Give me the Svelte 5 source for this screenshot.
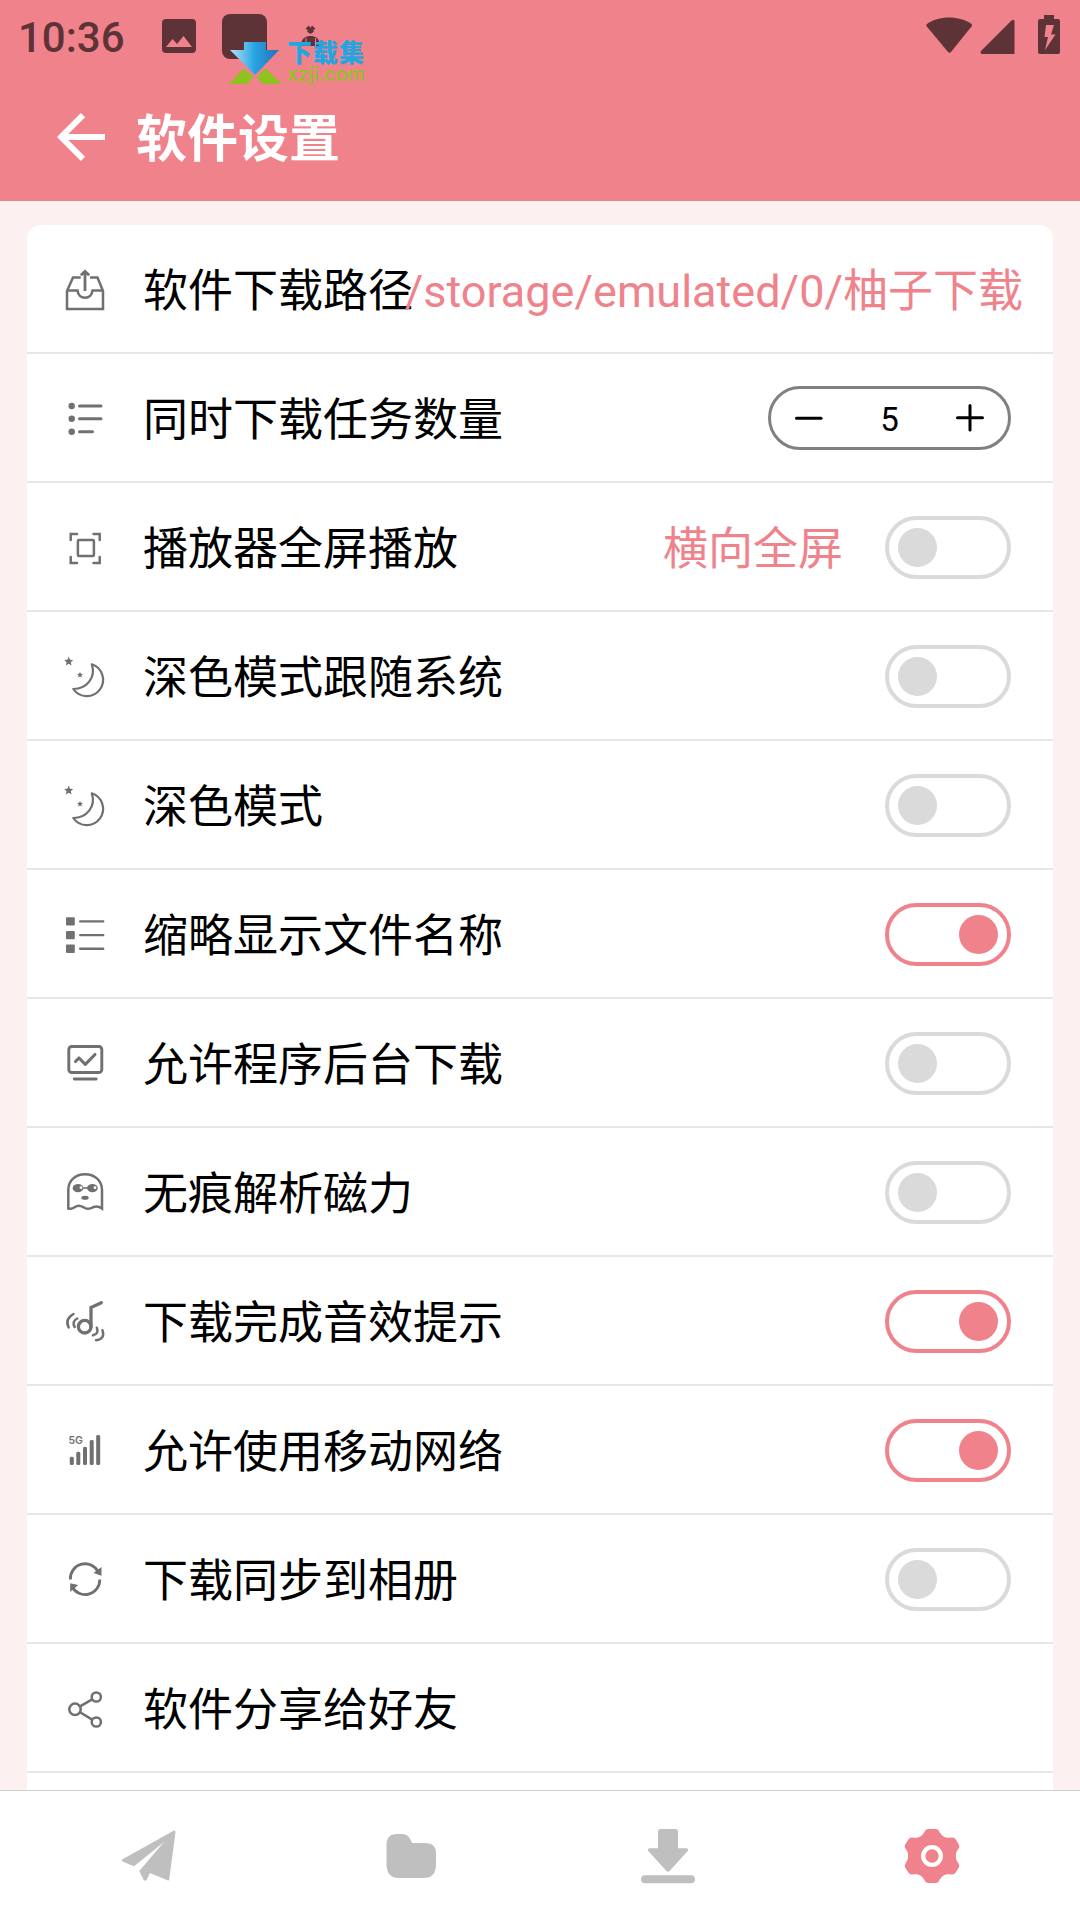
<script lang="ts">
	type Row = {
		icon: string;
		label: string;
		value?: string;
		on?: boolean;
		stepper?: boolean;
	};

	let rows: Row[] = $state([
		{ icon: 'tray', label: '软件下载路径', value: '/storage/emulated/0/柚子下载' },
		{ icon: 'tasks', label: '同时下载任务数量', stepper: true },
		{ icon: 'fullscreen', label: '播放器全屏播放', value: '横向全屏', on: false },
		{ icon: 'moon', label: '深色模式跟随系统', on: false },
		{ icon: 'moon', label: '深色模式', on: false },
		{ icon: 'list', label: '缩略显示文件名称', on: true },
		{ icon: 'monitor', label: '允许程序后台下载', on: false },
		{ icon: 'ghost', label: '无痕解析磁力', on: false },
		{ icon: 'sound', label: '下载完成音效提示', on: true },
		{ icon: 'signal', label: '允许使用移动网络', on: true },
		{ icon: 'sync', label: '下载同步到相册', on: false },
		{ icon: 'share', label: '软件分享给好友' }
	]);

	let count = $state(5);

	// x, top of each bar in the 5G icon
	const bars = [
		[8.8, 30.7],
		[15.3, 25.7],
		[22, 20.7],
		[28.7, 14],
		[35.2, 9]
	];
</script>

{#snippet rowIcon(name: string)}
	<svg class="icon" viewBox="0 0 48 48">
		{#if name === 'tray'}
			<path d="M19.7 12.5H12L6 26V44H42V26L36.5 12.5H29" />
			<path d="M6 25.5H16.5C17 30 20 32.8 24 32.8S31 30 31.5 25.5H42" />
			<path d="M24 26V7.5M19.8 10.3L24 6.5L28.2 10.3" stroke-width="2.8" />
		{:else if name === 'tasks'}
			<g class="fill">
				<circle cx="10.7" cy="12" r="3.2" />
				<circle cx="10.7" cy="24.7" r="3.2" />
				<circle cx="10.7" cy="37.7" r="3.2" />
			</g>
			<path class="round" d="M18.5 12H40M18.5 24.7H40M18.5 37.7H31.5" stroke-width="3" />
		{:else if name === 'fullscreen'}
			<rect x="16.9" y="17" width="16" height="16" rx="1" />
			<path class="round" d="M9.7 17V11H16M32.5 11H38.7V17M38.7 34V40H32.5M16 40H9.7V34" />
		{:else if name === 'moon'}
			<path class="moon" d="M30.8 12.3A16.3 16.3 0 1 1 12.3 37C25.5 37 35.3 25.5 30.8 12.3Z" />
			<path class="fill" d="M7.7 4.6L9 7.7L12.2 8L9.8 10.2L10.6 13.4L7.7 11.7L4.8 13.4L5.6 10.2L3.2 8L6.4 7.7Z" />
			<path class="fill" d="M19 19.9L19.9 21.8L21.9 22.1L20.4 23.5L20.8 25.5L19 24.5L17.2 25.5L17.6 23.5L16.1 22.1L18.1 21.8Z" />
		{:else if name === 'list'}
			<g class="fill">
				<rect x="5" y="7.2" width="8.8" height="8.4" rx="1" />
				<rect x="5" y="20.9" width="8.8" height="8.4" rx="1" />
				<rect x="5" y="34.5" width="8.8" height="8.4" rx="1" />
			</g>
			<path class="round" d="M19.2 11.4H42.2M19.2 25.1H42.2M19.2 38.8H42.2" stroke-width="2.4" />
		{:else if name === 'monitor'}
			<rect x="7.8" y="7.5" width="33" height="26" rx="3" stroke-width="2.9" />
			<path class="round" d="M13.3 40H35.2" stroke-width="2.9" />
			<path class="round" d="M14.5 22.5L18 19L24.3 25.3L34 15.5" stroke-width="3.1" stroke-linejoin="round" />
		{:else if name === 'ghost'}
			<path d="M7.3 40.5V22C7.3 12 15 6.3 24 6.3S41 12 41 22V40.5Q35.5 36.5 30 40.2Q26.5 41.5 24 40Q18 36 14 39Q10.5 41.5 7.3 40.5Z" />
			<path d="M17 20H31" stroke-width="1.6" />
			<g class="fill">
				<ellipse cx="17" cy="20.2" rx="5.3" ry="4.1" />
				<ellipse cx="31.4" cy="20.2" rx="5.3" ry="4.1" />
				<ellipse cx="24" cy="29.7" rx="3.7" ry="2" />
			</g>
			<circle class="hole" cx="20" cy="19.7" r="1.4" />
			<circle class="hole" cx="34" cy="19.7" r="1.4" />
		{:else if name === 'sound'}
			<circle cx="23.7" cy="29.7" r="6.3" stroke-width="3.3" />
			<path class="round" d="M30 30V10.5L40.3 5.8" stroke-width="3.3" />
			<path class="round" d="M12.5 17Q3.5 22 7.7 30.5M16.3 21.5Q10.5 24.5 13.7 30M35.8 30.7Q38.5 36.5 32 38.3M41.5 33.3Q44.5 42 35 43.2" />
		{:else if name === 'signal'}
			<text x="7.5" y="17.7">5G</text>
			{#each bars as [x, y]}
				<rect class="fill" {x} {y} width="4" height={39 - y} rx="1.5" />
			{/each}
		{:else if name === 'sync'}
			<path d="M9.4 24.5A14.7 14.7 0 0 1 37.5 17.5M38.8 24.5A14.7 14.7 0 0 1 11 31.5" stroke-width="2.8" />
			<path class="fill" d="M40.5 12V20.8L32.5 18Z" />
			<path class="fill" d="M9.2 28.2L17.2 30L9.2 37Z" />
		{:else if name === 'share'}
			<circle cx="14" cy="25.3" r="5.7" />
			<circle cx="35.3" cy="13" r="4.6" />
			<circle cx="35.3" cy="38" r="4.6" />
			<path d="M19 22.3L31.2 15.3M19 28.3L31.2 35.6" />
		{/if}
	</svg>
{/snippet}

<div class="screen">
	<header>
		<div class="status">
			<span class="time">10:36</span>
			<svg class="notices" viewBox="0 0 180 60">
				<path fill-rule="evenodd" d="M4 19H30Q34 19 34 23V49Q34 53 30 53H4Q0 53 0 49V23Q0 19 4 19ZM4 47H30L21.5 36L15 44L10.5 39Z" />
				<rect x="60" y="14" width="45" height="45" rx="8" />
				<path d="M139 44C140 38 144 36 148.5 36S157 38 158 44V46H139Z" />
				<path d="M148.500 34L144.800 31.500L146 30.500L143.500 28.500L147 25.500L148.500 28L150 25.500L153.500 28.500L151 30.500L152.200 31.500Z" />
				<path class="seam" d="M144 38V46M153.5 38V46" />
			</svg>
			<svg class="system" viewBox="0 0 136 60">
				<path d="M1 24C12 15.2 34 15.2 45.5 24Q46.5 25 45.5 26.5L25 52Q23.5 53.5 22 52L.8 26.5Q-.2 25 1 24Z" />
				<path d="M56.5 54Q53.5 53.5 55 51L85 21Q88 18.5 88.5 21.5V54Z" />
				<path fill-rule="evenodd" d="M118 15H128V19H132Q134 19 134 21V52Q134 54 132 54H114Q112 54 112 52V21Q112 19 114 19H118ZM120 25L118.5 37H122L119 50L129.5 34.5H125L128 25Z" />
			</svg>
		</div>
		<div class="title">
			<svg class="back" viewBox="0 0 50 52"><path d="M49 26H5M27 4.2L5.2 26L27 47.8" /></svg>
			<h1>软件设置</h1>
		</div>
		<div class="mark">
			<svg viewBox="0 0 54 44">
				<defs>
					<linearGradient id="arrow">
						<stop offset="0" stop-color="#b5e3f8" />
						<stop offset="0.5" stop-color="#25a5e2" />
						<stop offset="1" stop-color="#2a6cb8" />
					</linearGradient>
				</defs>
				<path fill="url(#arrow)" d="M16 0H38V8H51L27 33L2 8H16Z" />
				<path fill="#8dc21f" d="M1 42L16 26.5L25.5 35L19 42ZM28.5 35L38 26.5L53.5 42H35Z" />
			</svg>
			<div class="mark-text">
				<b>下载集</b>
				<span>xzji.com</span>
			</div>
		</div>
	</header>

	<main>
		<div class="card">
			{#each rows as row}
				<div class="row">
					{@render rowIcon(row.icon)}
					<span class="label">{row.label}</span>
					{#if row.value}
						<span class="value" class:beside={row.on !== undefined}>{row.value}</span>
					{/if}
					{#if row.stepper}
						<div class="stepper">
							<button aria-label="minus" onclick={() => count--}>
								<svg viewBox="0 0 28 28"><path d="M1.5 14.2H26" /></svg>
							</button>
							<span>{count}</span>
							<button aria-label="plus" onclick={() => count++}>
								<svg viewBox="0 0 28 28"><path d="M1.5 13.7H26.5M14 1.5V26" /></svg>
							</button>
						</div>
					{/if}
					{#if row.on !== undefined}
						<button class="toggle" class:on={row.on} aria-label={row.label} onclick={() => (row.on = !row.on)}>
							<span class="knob"></span>
						</button>
					{/if}
				</div>
			{/each}
			<div class="row"></div>
		</div>
	</main>

	<nav>
		<svg viewBox="0 0 60 60">
			<path d="M56 4.5Q57.5 4 57.5 6L51.2 53.5Q51 55 49.5 54.2L32 47L28.5 54Q27 55.5 25.7 54L21.3 45L46 16L17 39.5Q15.5 40.5 14 39.6L4.5 35.5Q3 34.5 4.5 33.3Z" />
		</svg>
		<svg viewBox="0 0 60 60">
			<path d="M18 8H23.5Q30 8 33 17H46Q57 17 57 27V38Q57 52 45 52H20Q7.5 52 7.5 38V19Q7.5 8 18 8Z" />
		</svg>
		<svg viewBox="0 0 60 60">
			<path d="M18 6Q18 3 21 3H35Q38 3 38 6V22.2H46Q49.5 22.5 47.5 25.2L29.5 45Q28 46.5 26.5 45L8.5 25.2Q6.5 22.5 10 22.2H18Z" />
			<rect x="1" y="49.3" width="54" height="7.9" rx="3.9" />
		</svg>
		<svg class="active" viewBox="0 0 60 60">
			<path d="M27 3H35Q37 3 38 5C41 11 45 12.5 51 11.5Q53.5 11.3 54.5 13L57.5 18Q59 21 57.5 22.5C54 27 54 33 57.5 37.5Q59 39.5 57.5 42L54.5 46.8Q53 48.8 51 48.5C45 47.5 41 49 38 55Q37 57 35 57H27Q25 57 24 55C21 49 17 47.5 11 48.5Q9 48.8 7.5 46.8L4.5 42Q3 39.5 4.5 37.5C8 33 8 27 4.5 22.5Q3 21 4.5 18L7.5 13.2Q9 11.3 11 11.5C17 12.5 21 11 24 5Q25 3 27 3Z" />
			<circle cx="31" cy="30" r="8.8" />
		</svg>
	</nav>
</div>

<style>
	:global(body) {
		margin: 0;
	}

	.screen {
		width: 1080px;
		height: 1920px;
		display: flex;
		flex-direction: column;
		overflow: hidden;
		background: #fdf0f0;
		font-family: Roboto, 'Noto Sans CJK SC', sans-serif;
		color: #000;
	}

	header {
		position: relative;
		flex: none;
		height: 201px;
		background: #f0828b;
	}

	.status {
		display: flex;
		height: 72px;
		padding: 0 18px;
		color: #5e3338;
		fill: #5e3338;
	}

	.time {
		width: 144px;
		font-size: 42px;
		font-weight: 500;
		line-height: 75px;
	}

	.notices {
		width: 180px;
		height: 60px;
	}

	.seam {
		stroke: #f0828b;
		stroke-width: 1;
	}

	.system {
		width: 136px;
		height: 60px;
		margin-left: auto;
	}

	.title {
		display: flex;
		align-items: center;
		height: 129px;
		padding-left: 56px;
	}

	.back {
		width: 50px;
		height: 52px;
		fill: none;
		stroke: #fff;
		stroke-width: 6;
	}

	h1 {
		margin: 6px 0 0 30px;
		color: #fff;
		font-size: 51px;
		font-weight: 700;
		line-height: 60px;
	}

	/* site mark floating over the status bar */
	.mark {
		position: absolute;
		left: 228px;
		top: 42px;
		display: flex;
		gap: 5px;
	}

	.mark svg {
		width: 54px;
		height: 44px;
	}

	.mark-text {
		display: flex;
		flex-direction: column;
	}

	.mark b {
		color: #25a5e0;
		font-size: 25px;
		font-weight: 900;
		letter-spacing: 1px;
		line-height: 23px;
	}

	.mark span {
		color: #8fc31f;
		font-family: Inter, sans-serif;
		font-size: 19.5px;
		font-weight: 500;
		line-height: 19px;
	}

	main {
		flex: 1;
		min-height: 0;
		padding: 24px 27px 0;
		overflow: hidden;
	}

	.card {
		background: #fff;
		border-radius: 14px;
	}

	.row {
		display: flex;
		align-items: center;
		box-sizing: border-box;
		height: 129px;
		padding: 0 42px 0 34px;
		border-bottom: 2px solid #e7e7e7;
	}

	.icon {
		flex: none;
		width: 48px;
		height: 48px;
		margin-right: 34px;
		fill: none;
		stroke: #707070;
		stroke-width: 2.5;
	}

	.icon .fill,
	.icon text {
		fill: #707070;
		stroke: none;
	}

	.icon .hole {
		fill: #fff;
		stroke: none;
	}

	.icon .round {
		stroke-linecap: round;
	}

	.icon .moon {
		stroke-width: 2.2;
		stroke-linejoin: round;
	}

	.icon text {
		font: 600 10.5px Inter, sans-serif;
	}

	.label,
	.value {
		padding-top: 7px;
		font-size: 45px;
		line-height: 60px;
		white-space: nowrap;
	}

	.value {
		margin: 0 -12px 0 auto;
		color: #f0828b;
	}

	/* a long path runs back over its label */
	.label {
		flex: 0 0 auto;
	}

	.label + .value:not(.beside) {
		flex: 1 1 0;
		min-width: 0;
		display: flex;
		justify-content: flex-end;
	}

	.value.beside {
		margin-right: 42px;
	}

	.stepper {
		display: flex;
		align-items: center;
		justify-content: space-between;
		box-sizing: border-box;
		width: 243px;
		height: 64px;
		margin-left: auto;
		padding: 0 24px;
		border: 3px solid #808080;
		border-radius: 32px;
		font-size: 33px;
	}

	.stepper span {
		padding-top: 3px;
	}

	button {
		display: block;
		padding: 0;
		border: 0;
		background: none;
	}

	.stepper svg {
		display: block;
		width: 28px;
		height: 28px;
		stroke: #000;
		stroke-width: 3;
		stroke-linecap: round;
	}

	.toggle {
		display: flex;
		align-items: center;
		box-sizing: border-box;
		flex: none;
		width: 126px;
		height: 63px;
		margin: 2px 0 0 auto;
		padding: 0 9px;
		border: 4px solid #dadada;
		border-radius: 32px;
	}

	.beside + .toggle {
		margin-left: 0;
	}

	.knob {
		width: 39px;
		height: 39px;
		border-radius: 50%;
		background: #dadada;
	}

	.toggle.on {
		justify-content: flex-end;
		border-color: #f0828b;
	}

	.on .knob {
		background: #f0828b;
	}

	nav {
		display: flex;
		flex: none;
		gap: 201px;
		box-sizing: border-box;
		height: 130px;
		padding: 35px 0 0 118px;
		border-top: 1px solid #d0d0d0;
		background: #fff;
	}

	nav svg {
		width: 60px;
		height: 60px;
		fill: #bfbfbf;
	}

	nav .active {
		fill: #f0828b;
	}

	nav circle {
		fill: none;
		stroke: #fff;
		stroke-width: 4.3;
	}
</style>
